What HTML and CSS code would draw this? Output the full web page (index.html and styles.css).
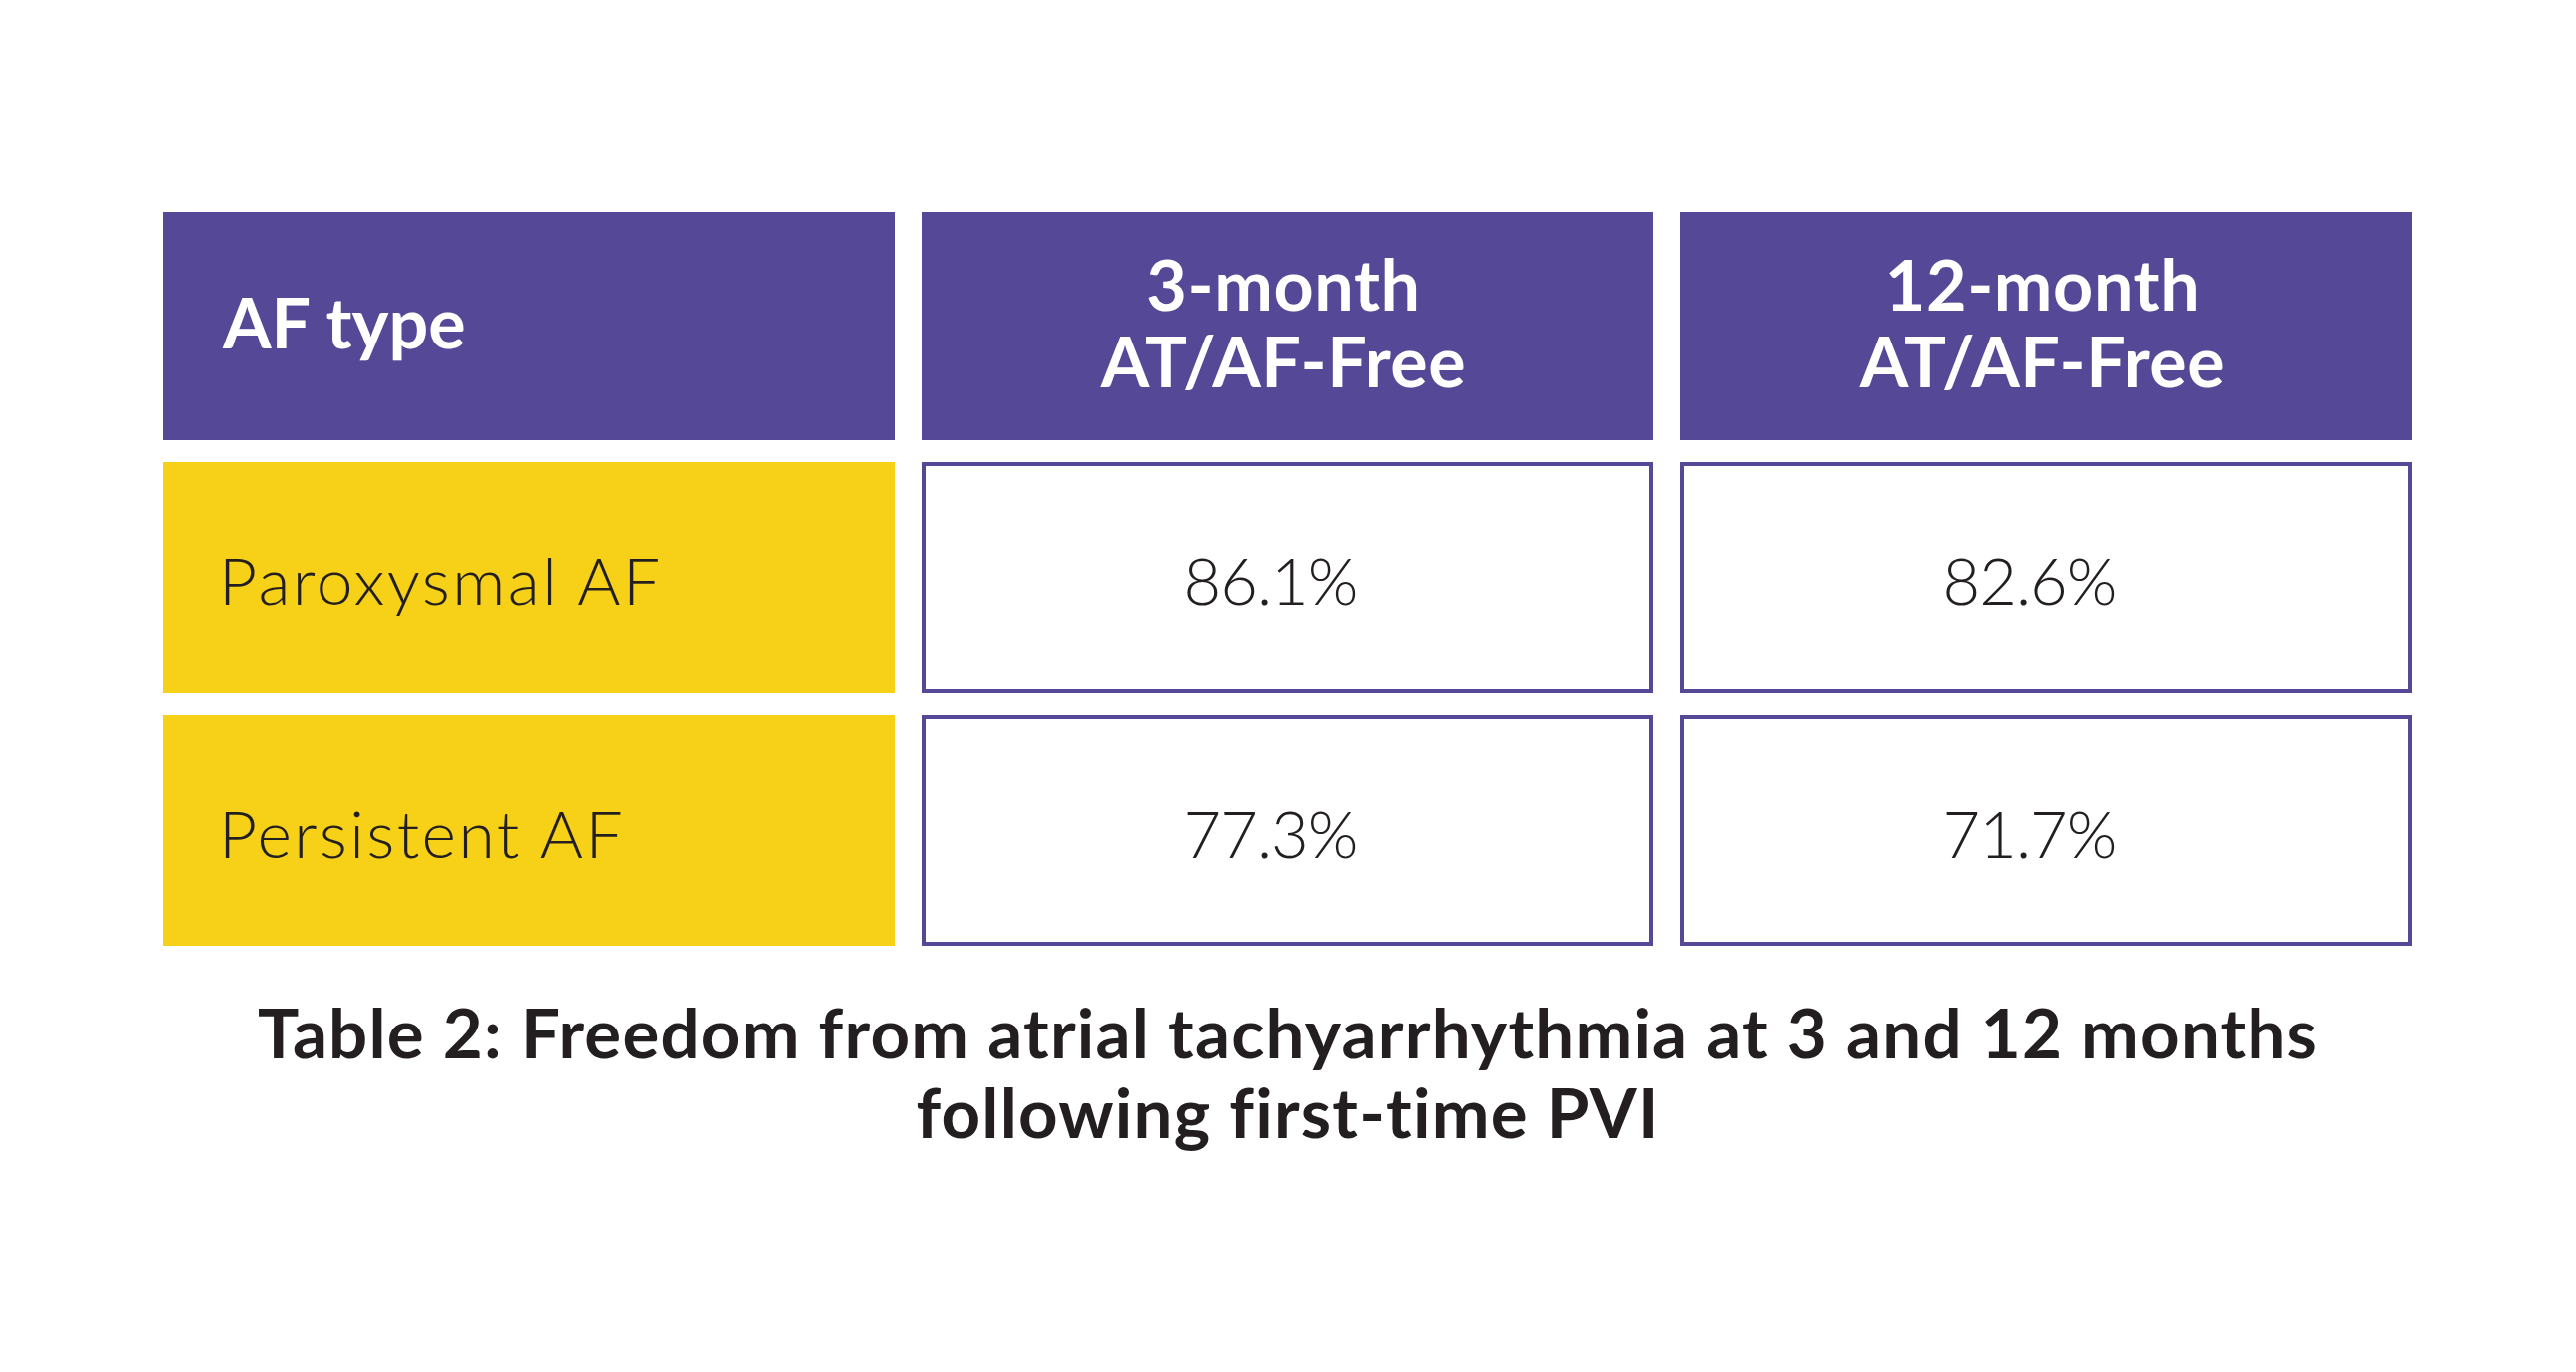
FILE: index.html
```html
<!DOCTYPE html>
<html lang="en">
<head>
<meta charset="utf-8">
<title>Table 2: Freedom from atrial tachyarrhythmia</title>
<link rel="stylesheet" href="styles.css">
</head>
<body>
<main class="page">
  <div class="table">
    <div class="cell head head-left">AF type</div>
    <div class="cell head">3-month<br>AT/AF-Free</div>
    <div class="cell head">12-month<br>AT/AF-Free</div>

    <div class="cell type">Paroxysmal AF</div>
    <div class="cell value">86.1%</div>
    <div class="cell value">82.6%</div>

    <div class="cell type">Persistent AF</div>
    <div class="cell value">77.3%</div>
    <div class="cell value">71.7%</div>
  </div>
  <p class="caption">Table 2: Freedom from atrial tachyarrhythmia at 3 and 12 months<br>following first-time PVI</p>
</main>
</body>
</html>
```
FILE: styles.css
```css
html, body {
  margin: 0;
  padding: 0;
  background: #ffffff;
}

body {
  font-family: "Lato", "Open Sans", sans-serif;
  color: #231f20;
}

.page {
  padding: 212px 0 0 163px;
  width: 2254px;
}

.table {
  display: grid;
  grid-template-columns: 733px 733px 733px;
  grid-template-rows: 229px 231px 231px;
  column-gap: 27px;
  row-gap: 22px;
}

.cell {
  box-sizing: border-box;
  display: flex;
  align-items: center;
}

.head {
  background: #554896;
  color: #ffffff;
  font-weight: 700;
  font-size: 70px;
  line-height: 77px;
  letter-spacing: 0.6px;
  justify-content: center;
  text-align: center;
  padding-bottom: 8px;
  padding-right: 8px;
}

.head-left {
  justify-content: flex-start;
  text-align: left;
  padding-left: 60px;
  padding-right: 0;
  letter-spacing: 0;
}

.type {
  background: #f7d117;
  font-weight: 300;
  font-size: 66px;
  letter-spacing: 2.4px;
  padding-left: 56px;
  padding-top: 4px;
}

.value {
  border: 4px solid #554896;
  background: #ffffff;
  font-weight: 300;
  font-size: 65px;
  letter-spacing: -1px;
  justify-content: center;
  padding-right: 34px;
  padding-top: 4px;
}

.caption {
  margin: 47px 0 0 0;
  text-align: center;
  font-weight: 700;
  font-size: 69px;
  line-height: 80px;
  letter-spacing: 1.2px;
  color: #231f20;
}
```
